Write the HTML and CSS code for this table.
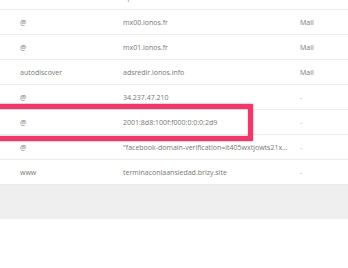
FILE: index.html
```html
<!DOCTYPE html>
<html lang="es">
<head>
  <meta charset="UTF-8" />
  <meta name="viewport" content="width=device-width, initial-scale=1.0" />
  <title>Registros DNS</title>
  <link rel="stylesheet" href="styles.css">
</head>
<body>
  <div class="records">
    <div class="row head">
      <div>Nombre de host</div>
      <div class="value">Apunta hacia / Valor</div>
      <div>Servicio</div>
    </div>
    <div class="row">
      <div>@</div>
      <div class="value">mx00.ionos.fr</div>
      <div>Mail</div>
    </div>
    <div class="row">
      <div>@</div>
      <div class="value">mx01.ionos.fr</div>
      <div>Mail</div>
    </div>
    <div class="row">
      <div>autodiscover</div>
      <div class="value">adsredir.ionos.info</div>
      <div>Mail</div>
    </div>
    <div class="row">
      <div>@</div>
      <div class="value">34.237.47.210</div>
      <div class="dash">-</div>
    </div>
    <div class="row marked">
      <div>@</div>
      <div class="value">2001:8d8:100f:f000:0:0:0:2d9</div>
      <div class="dash">-</div>
      <span class="highlight"></span>
    </div>
    <div class="row">
      <div>@</div>
      <div class="value">"facebook-domain-verification=it405wxtjowts21xq8fhd2n7yq9kbs"</div>
      <div class="dash">-</div>
    </div>
    <div class="row">
      <div>www</div>
      <div class="value">terminaconlaansiedad.brizy.site</div>
      <div class="dash">-</div>
    </div>
  </div>
  <div class="table-foot"></div>
</body>
</html>
```

FILE: styles.css
```css
* {
  margin: 0;
  padding: 0;
  box-sizing: border-box;
}
body {
  font-family: 'Open Sans', sans-serif;
  background: #fff;
  color: #777;
  overflow: hidden;
}
.records {
  margin-top: -15px;
}
.row {
  position: relative;
  display: grid;
  grid-template-columns: 103px 177px 1fr;
  align-items: center;
  height: 25px;
  padding-left: 20px;
  border-bottom: 1px solid #ececec;
  font-size: 7px;
  white-space: nowrap;
}
.row.head {
  color: #888;
}
.value {
  overflow: hidden;
  text-overflow: ellipsis;
  padding-right: 12px;
}
.dash {
  color: #aaa;
}
.highlight {
  position: absolute;
  top: -6px;
  left: -10px;
  width: 263px;
  height: 37px;
  border: 5px solid #f0386c;
  box-shadow: 0 0 2px rgba(0, 0, 0, 0.45), inset 0 0 2px rgba(0, 0, 0, 0.35);
}
.table-foot {
  height: 34px;
  background: #efefef;
}
```
